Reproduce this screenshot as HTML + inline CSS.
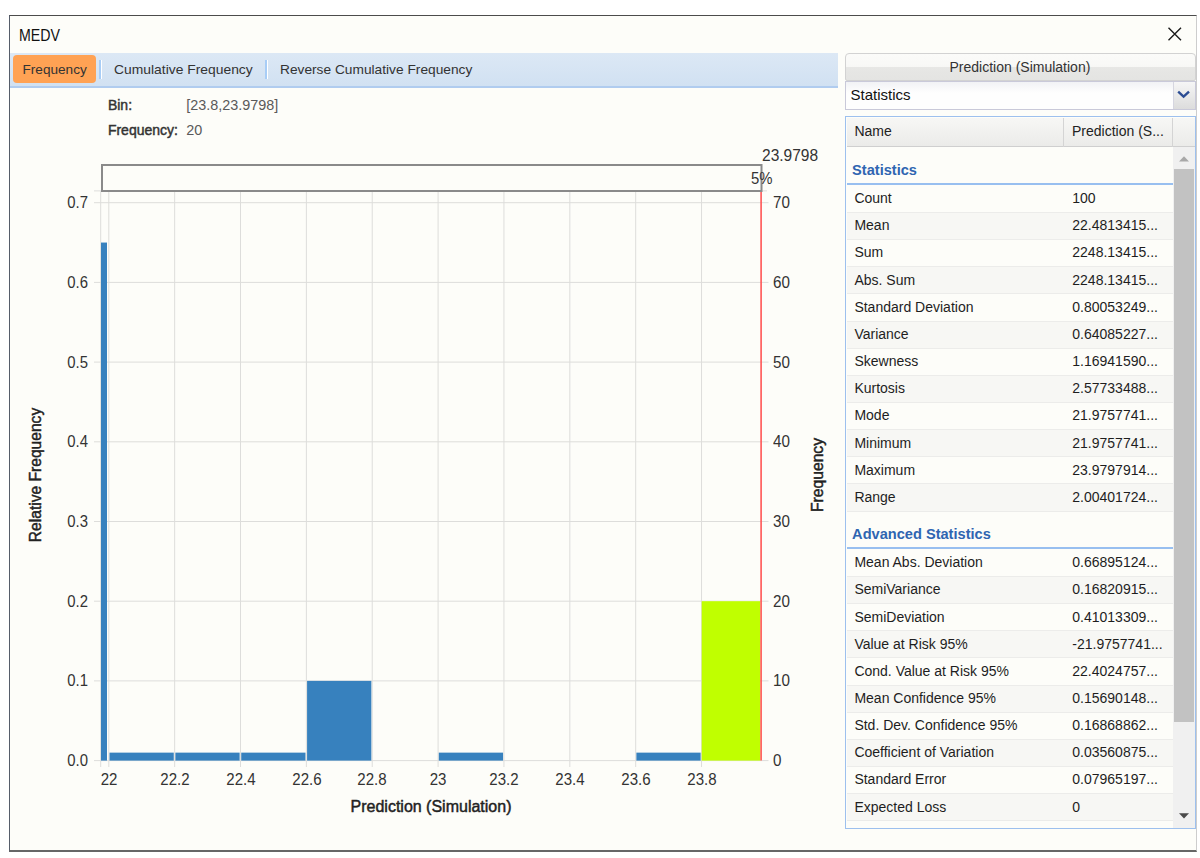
<!DOCTYPE html>
<html><head><meta charset="utf-8"><style>
html,body{margin:0;padding:0;width:1200px;height:858px;overflow:hidden;background:#ffffff;}
body{position:relative;font-family:"Liberation Sans",sans-serif;}
.t{position:absolute;white-space:nowrap;line-height:1;}
.a{position:absolute;box-sizing:border-box;}
</style></head><body>
<div class="a" style="left:9px;top:15px;width:1188px;height:837px;border-style:solid;border-width:1px 1px 2px 1px;border-color:#4c4c4c #cdcdcd #666 #565d6a;background:#fdfdf9;"></div>
<div class="t" style="left:19.20px;top:28.02px;font-size:15.6px;color:#111;transform:scaleX(0.91);transform-origin:0 0;">MEDV</div>
<svg class="a" style="left:1166px;top:25px" width="18" height="18"><path d="M2.5 2.8 L15 15.2 M15 2.8 L2.5 15.2" stroke="#1a1a1a" stroke-width="1.4" fill="none"/></svg>
<div class="a" style="left:10px;top:52.5px;width:828px;height:35.5px;background:linear-gradient(#dce8f5,#d1e1f2);border-bottom:2px solid #b0ccef;"></div>
<div class="a" style="left:13px;top:55.3px;width:82.5px;height:28px;background:#ffa254;border-radius:4px;"></div>
<div class="a" style="left:99px;top:60px;width:2px;height:18.5px;background:#a8cdf6;border-right:1px solid #fff;box-sizing:content-box"></div>
<div class="a" style="left:264.5px;top:60px;width:2px;height:18.5px;background:#a8cdf6;border-right:1px solid #fff;box-sizing:content-box"></div>
<div class="t" style="left:22.50px;top:62.82px;font-size:13.6px;color:#333;">Frequency</div>
<div class="t" style="left:113.80px;top:62.82px;font-size:13.6px;color:#333;transform:scaleX(1.02);transform-origin:0 0;">Cumulative Frequency</div>
<div class="t" style="left:279.50px;top:62.82px;font-size:13.6px;color:#333;transform:scaleX(1.01);transform-origin:0 0;">Reverse Cumulative Frequency</div>
<div class="t" style="left:107.90px;top:98.18px;font-size:14px;color:#333;-webkit-text-stroke:0.45px #333;">Bin:</div>
<div class="t" style="left:186.30px;top:98.34px;font-size:14.4px;color:#5a5a5a;">[23.8,23.9798]</div>
<div class="t" style="left:107.90px;top:122.58px;font-size:14px;color:#333;-webkit-text-stroke:0.45px #333;">Frequency:</div>
<div class="t" style="left:186.30px;top:122.74px;font-size:14.4px;color:#5a5a5a;">20</div>
<svg class="a" style="left:0;top:0" width="840" height="858"><line x1="100.7" y1="191" x2="100.7" y2="767" stroke="#dddddb" stroke-width="1"/><line x1="108.8" y1="191" x2="108.8" y2="767" stroke="#dddddb" stroke-width="1"/><line x1="174.66" y1="191" x2="174.66" y2="767" stroke="#dddddb" stroke-width="1"/><line x1="240.52" y1="191" x2="240.52" y2="767" stroke="#dddddb" stroke-width="1"/><line x1="306.38" y1="191" x2="306.38" y2="767" stroke="#dddddb" stroke-width="1"/><line x1="372.24" y1="191" x2="372.24" y2="767" stroke="#dddddb" stroke-width="1"/><line x1="438.1" y1="191" x2="438.1" y2="767" stroke="#dddddb" stroke-width="1"/><line x1="503.96" y1="191" x2="503.96" y2="767" stroke="#dddddb" stroke-width="1"/><line x1="569.82" y1="191" x2="569.82" y2="767" stroke="#dddddb" stroke-width="1"/><line x1="635.68" y1="191" x2="635.68" y2="767" stroke="#dddddb" stroke-width="1"/><line x1="701.54" y1="191" x2="701.54" y2="767" stroke="#dddddb" stroke-width="1"/><line x1="94" y1="190.9" x2="767" y2="190.9" stroke="#dddddb" stroke-width="1"/><line x1="94" y1="760.6" x2="768.5" y2="760.6" stroke="#dddddb" stroke-width="1"/><line x1="94" y1="680.9" x2="768.5" y2="680.9" stroke="#dddddb" stroke-width="1"/><line x1="94" y1="601.2" x2="768.5" y2="601.2" stroke="#dddddb" stroke-width="1"/><line x1="94" y1="521.5" x2="768.5" y2="521.5" stroke="#dddddb" stroke-width="1"/><line x1="94" y1="441.8" x2="768.5" y2="441.8" stroke="#dddddb" stroke-width="1"/><line x1="94" y1="362.1" x2="768.5" y2="362.1" stroke="#dddddb" stroke-width="1"/><line x1="94" y1="282.4" x2="768.5" y2="282.4" stroke="#dddddb" stroke-width="1"/><line x1="94" y1="202.7" x2="768.5" y2="202.7" stroke="#dddddb" stroke-width="1"/></svg>
<svg class="a" style="left:0;top:0" width="840" height="858"><rect x="101" y="242.55" width="6" height="518.05" fill="#3781be"/><rect x="109.50" y="752.63" width="64.26" height="7.97" fill="#3781be"/><rect x="175.36" y="752.63" width="64.26" height="7.97" fill="#3781be"/><rect x="241.22" y="752.63" width="64.26" height="7.97" fill="#3781be"/><rect x="307.08" y="680.90" width="64.26" height="79.70" fill="#3781be"/><rect x="438.80" y="752.63" width="64.26" height="7.97" fill="#3781be"/><rect x="636.38" y="752.63" width="64.26" height="7.97" fill="#3781be"/><rect x="701.7" y="601.20" width="58.6" height="159.40" fill="#c0ff00"/><line x1="761.1" y1="191" x2="761.1" y2="760.60" stroke="#ff5555" stroke-width="1.6"/><rect x="102" y="165" width="659.5" height="26" fill="none" stroke="#8a8a8a" stroke-width="2"/></svg>
<div class="t" style="left:87.50px;top:753.18px;font-size:16px;color:#333;transform:translateX(-100%) scaleX(0.93);transform-origin:100% 0;">0.0</div>
<div class="t" style="left:773.00px;top:753.18px;font-size:16px;color:#333;transform:scaleX(0.95);transform-origin:0 0;">0</div>
<div class="t" style="left:87.50px;top:673.48px;font-size:16px;color:#333;transform:translateX(-100%) scaleX(0.93);transform-origin:100% 0;">0.1</div>
<div class="t" style="left:773.00px;top:673.48px;font-size:16px;color:#333;transform:scaleX(0.95);transform-origin:0 0;">10</div>
<div class="t" style="left:87.50px;top:593.78px;font-size:16px;color:#333;transform:translateX(-100%) scaleX(0.93);transform-origin:100% 0;">0.2</div>
<div class="t" style="left:773.00px;top:593.78px;font-size:16px;color:#333;transform:scaleX(0.95);transform-origin:0 0;">20</div>
<div class="t" style="left:87.50px;top:514.08px;font-size:16px;color:#333;transform:translateX(-100%) scaleX(0.93);transform-origin:100% 0;">0.3</div>
<div class="t" style="left:773.00px;top:514.08px;font-size:16px;color:#333;transform:scaleX(0.95);transform-origin:0 0;">30</div>
<div class="t" style="left:87.50px;top:434.38px;font-size:16px;color:#333;transform:translateX(-100%) scaleX(0.93);transform-origin:100% 0;">0.4</div>
<div class="t" style="left:773.00px;top:434.38px;font-size:16px;color:#333;transform:scaleX(0.95);transform-origin:0 0;">40</div>
<div class="t" style="left:87.50px;top:354.68px;font-size:16px;color:#333;transform:translateX(-100%) scaleX(0.93);transform-origin:100% 0;">0.5</div>
<div class="t" style="left:773.00px;top:354.68px;font-size:16px;color:#333;transform:scaleX(0.95);transform-origin:0 0;">50</div>
<div class="t" style="left:87.50px;top:274.98px;font-size:16px;color:#333;transform:translateX(-100%) scaleX(0.93);transform-origin:100% 0;">0.6</div>
<div class="t" style="left:773.00px;top:274.98px;font-size:16px;color:#333;transform:scaleX(0.95);transform-origin:0 0;">60</div>
<div class="t" style="left:87.50px;top:195.28px;font-size:16px;color:#333;transform:translateX(-100%) scaleX(0.93);transform-origin:100% 0;">0.7</div>
<div class="t" style="left:773.00px;top:195.28px;font-size:16px;color:#333;transform:scaleX(0.95);transform-origin:0 0;">70</div>
<div class="t" style="left:109.00px;top:772.08px;font-size:16px;color:#333;transform:translateX(-50%) scaleX(0.94);transform-origin:50% 0;">22</div>
<div class="t" style="left:174.86px;top:772.08px;font-size:16px;color:#333;transform:translateX(-50%) scaleX(0.94);transform-origin:50% 0;">22.2</div>
<div class="t" style="left:240.72px;top:772.08px;font-size:16px;color:#333;transform:translateX(-50%) scaleX(0.94);transform-origin:50% 0;">22.4</div>
<div class="t" style="left:306.58px;top:772.08px;font-size:16px;color:#333;transform:translateX(-50%) scaleX(0.94);transform-origin:50% 0;">22.6</div>
<div class="t" style="left:372.44px;top:772.08px;font-size:16px;color:#333;transform:translateX(-50%) scaleX(0.94);transform-origin:50% 0;">22.8</div>
<div class="t" style="left:438.30px;top:772.08px;font-size:16px;color:#333;transform:translateX(-50%) scaleX(0.94);transform-origin:50% 0;">23</div>
<div class="t" style="left:504.16px;top:772.08px;font-size:16px;color:#333;transform:translateX(-50%) scaleX(0.94);transform-origin:50% 0;">23.2</div>
<div class="t" style="left:570.02px;top:772.08px;font-size:16px;color:#333;transform:translateX(-50%) scaleX(0.94);transform-origin:50% 0;">23.4</div>
<div class="t" style="left:635.88px;top:772.08px;font-size:16px;color:#333;transform:translateX(-50%) scaleX(0.94);transform-origin:50% 0;">23.6</div>
<div class="t" style="left:701.74px;top:772.08px;font-size:16px;color:#333;transform:translateX(-50%) scaleX(0.94);transform-origin:50% 0;">23.8</div>
<div class="t" style="left:761.50px;top:148.48px;font-size:16px;color:#333;transform:scaleX(0.97);transform-origin:0 0;">23.9798</div>
<div class="t" style="left:750.50px;top:170.58px;font-size:16px;color:#333;transform:scaleX(0.93);transform-origin:0 0;">5%</div>
<div class="t" style="left:431.00px;top:799.18px;font-size:16px;color:#222;transform:translateX(-50%);transform-origin:50% 0;-webkit-text-stroke:0.45px #222;">Prediction (Simulation)</div>
<div class="t" style="left:35.5px;top:475px;font-size:16px;color:#222;-webkit-text-stroke:0.45px #222;transform:translate(-50%,-50%) rotate(-90deg) scaleX(0.975);">Relative Frequency</div>
<div class="t" style="left:817.5px;top:475px;font-size:16px;color:#222;-webkit-text-stroke:0.45px #222;transform:translate(-50%,-50%) rotate(-90deg) scaleX(0.98);">Frequency</div>
<div class="a" style="left:845px;top:53px;width:351px;height:28px;border:1px solid #d2d2d2;border-radius:4px 4px 2px 2px;background:linear-gradient(#fbfbf9 0,#f8f8f6 48%,#e7e7e5 50%,#e4e4e2 100%);"></div>
<div class="t" style="left:949.50px;top:59.58px;font-size:14px;color:#333;">Prediction (Simulation)</div>
<div class="a" style="left:845px;top:81px;width:351px;height:29px;border:1px solid #c9c9d9;background:linear-gradient(#f1f2f5,#fefefe 40%);"></div>
<div class="a" style="left:1173px;top:82px;width:22px;height:27px;background:linear-gradient(#f6f6f6,#dcdcdc);border-left:1px solid #d6d6e0;"></div>
<svg class="a" style="left:1176px;top:88px" width="16" height="12"><path d="M2.2 3.6 L7.6 8.6 L13 3.6" stroke="#2b4c93" stroke-width="2.4" fill="none"/></svg>
<div class="t" style="left:850.50px;top:87.38px;font-size:15px;color:#111;">Statistics</div>
<div class="a" style="left:845px;top:116px;width:351px;height:713px;border:1.5px solid #9dc0ee;background:#fdfdf9;"></div>
<div class="a" style="left:846.5px;top:117.5px;width:348px;height:29.5px;background:linear-gradient(#f7f7f5,#ebebe9);border-bottom:1px solid #cfcfcf;"></div>
<div class="a" style="left:1063px;top:117.5px;width:1px;height:29px;background:#d4d4d4;"></div>
<div class="a" style="left:1172px;top:117.5px;width:1px;height:29px;background:#d4d4d4;"></div>
<div class="t" style="left:854.40px;top:123.58px;font-size:14px;color:#222;">Name</div>
<div class="t" style="left:1072.00px;top:123.58px;font-size:14px;color:#222;">Prediction (S...</div>
<div class="a" style="left:1173px;top:147px;width:21.5px;height:680.5px;background:#f0f0f0;"></div>
<div class="a" style="left:1174px;top:169px;width:19.5px;height:553px;background:#c2c2c2;"></div>
<svg class="a" style="left:1173px;top:150px" width="22" height="16"><path d="M6 11.5 L11 6.2 L16 11.5 Z" fill="#a8a8a8"/></svg>
<svg class="a" style="left:1173px;top:806px" width="22" height="16"><path d="M6 7.2 L11 12.6 L16 7.2 Z" fill="#4a4a4a"/></svg>
<div class="a" style="left:846.5px;top:183.30px;width:326.5px;height:2px;background:#98bff0;"></div>
<div class="t" style="left:852.10px;top:162.62px;font-size:14.6px;font-weight:700;color:#2f65b1;transform:scaleX(1.0);transform-origin:0 0;">Statistics</div>
<div class="a" style="left:846.5px;top:185.80px;width:326.5px;height:27.15px;background:#fdfdf9;border-bottom:1px solid #ececea;"></div>
<div class="t" style="left:854.40px;top:191.15px;font-size:14px;color:#1e1e1e;">Count</div>
<div class="t" style="left:1072.30px;top:191.15px;font-size:14px;color:#1e1e1e;">100</div>
<div class="a" style="left:846.5px;top:212.95px;width:326.5px;height:27.15px;background:#f7f7f4;border-bottom:1px solid #ececea;"></div>
<div class="t" style="left:854.40px;top:218.30px;font-size:14px;color:#1e1e1e;">Mean</div>
<div class="t" style="left:1072.30px;top:218.30px;font-size:14px;color:#1e1e1e;">22.4813415...</div>
<div class="a" style="left:846.5px;top:240.10px;width:326.5px;height:27.15px;background:#fdfdf9;border-bottom:1px solid #ececea;"></div>
<div class="t" style="left:854.40px;top:245.45px;font-size:14px;color:#1e1e1e;">Sum</div>
<div class="t" style="left:1072.30px;top:245.45px;font-size:14px;color:#1e1e1e;">2248.13415...</div>
<div class="a" style="left:846.5px;top:267.25px;width:326.5px;height:27.15px;background:#f7f7f4;border-bottom:1px solid #ececea;"></div>
<div class="t" style="left:854.40px;top:272.60px;font-size:14px;color:#1e1e1e;">Abs. Sum</div>
<div class="t" style="left:1072.30px;top:272.60px;font-size:14px;color:#1e1e1e;">2248.13415...</div>
<div class="a" style="left:846.5px;top:294.40px;width:326.5px;height:27.15px;background:#fdfdf9;border-bottom:1px solid #ececea;"></div>
<div class="t" style="left:854.40px;top:299.75px;font-size:14px;color:#1e1e1e;">Standard Deviation</div>
<div class="t" style="left:1072.30px;top:299.75px;font-size:14px;color:#1e1e1e;">0.80053249...</div>
<div class="a" style="left:846.5px;top:321.55px;width:326.5px;height:27.15px;background:#f7f7f4;border-bottom:1px solid #ececea;"></div>
<div class="t" style="left:854.40px;top:326.90px;font-size:14px;color:#1e1e1e;">Variance</div>
<div class="t" style="left:1072.30px;top:326.90px;font-size:14px;color:#1e1e1e;">0.64085227...</div>
<div class="a" style="left:846.5px;top:348.70px;width:326.5px;height:27.15px;background:#fdfdf9;border-bottom:1px solid #ececea;"></div>
<div class="t" style="left:854.40px;top:354.05px;font-size:14px;color:#1e1e1e;">Skewness</div>
<div class="t" style="left:1072.30px;top:354.05px;font-size:14px;color:#1e1e1e;">1.16941590...</div>
<div class="a" style="left:846.5px;top:375.85px;width:326.5px;height:27.15px;background:#f7f7f4;border-bottom:1px solid #ececea;"></div>
<div class="t" style="left:854.40px;top:381.20px;font-size:14px;color:#1e1e1e;">Kurtosis</div>
<div class="t" style="left:1072.30px;top:381.20px;font-size:14px;color:#1e1e1e;">2.57733488...</div>
<div class="a" style="left:846.5px;top:403.00px;width:326.5px;height:27.15px;background:#fdfdf9;border-bottom:1px solid #ececea;"></div>
<div class="t" style="left:854.40px;top:408.35px;font-size:14px;color:#1e1e1e;">Mode</div>
<div class="t" style="left:1072.30px;top:408.35px;font-size:14px;color:#1e1e1e;">21.9757741...</div>
<div class="a" style="left:846.5px;top:430.15px;width:326.5px;height:27.15px;background:#f7f7f4;border-bottom:1px solid #ececea;"></div>
<div class="t" style="left:854.40px;top:435.50px;font-size:14px;color:#1e1e1e;">Minimum</div>
<div class="t" style="left:1072.30px;top:435.50px;font-size:14px;color:#1e1e1e;">21.9757741...</div>
<div class="a" style="left:846.5px;top:457.30px;width:326.5px;height:27.15px;background:#fdfdf9;border-bottom:1px solid #ececea;"></div>
<div class="t" style="left:854.40px;top:462.65px;font-size:14px;color:#1e1e1e;">Maximum</div>
<div class="t" style="left:1072.30px;top:462.65px;font-size:14px;color:#1e1e1e;">23.9797914...</div>
<div class="a" style="left:846.5px;top:484.45px;width:326.5px;height:27.15px;background:#f7f7f4;border-bottom:1px solid #ececea;"></div>
<div class="t" style="left:854.40px;top:489.80px;font-size:14px;color:#1e1e1e;">Range</div>
<div class="t" style="left:1072.30px;top:489.80px;font-size:14px;color:#1e1e1e;">2.00401724...</div>
<div class="a" style="left:846.5px;top:547.20px;width:326.5px;height:2px;background:#98bff0;"></div>
<div class="t" style="left:852.10px;top:526.52px;font-size:14.6px;font-weight:700;color:#2f65b1;transform:scaleX(1.0);transform-origin:0 0;">Advanced Statistics</div>
<div class="a" style="left:846.5px;top:549.90px;width:326.5px;height:27.15px;background:#fdfdf9;border-bottom:1px solid #ececea;"></div>
<div class="t" style="left:854.40px;top:555.25px;font-size:14px;color:#1e1e1e;">Mean Abs. Deviation</div>
<div class="t" style="left:1072.30px;top:555.25px;font-size:14px;color:#1e1e1e;">0.66895124...</div>
<div class="a" style="left:846.5px;top:577.05px;width:326.5px;height:27.15px;background:#f7f7f4;border-bottom:1px solid #ececea;"></div>
<div class="t" style="left:854.40px;top:582.40px;font-size:14px;color:#1e1e1e;">SemiVariance</div>
<div class="t" style="left:1072.30px;top:582.40px;font-size:14px;color:#1e1e1e;">0.16820915...</div>
<div class="a" style="left:846.5px;top:604.20px;width:326.5px;height:27.15px;background:#fdfdf9;border-bottom:1px solid #ececea;"></div>
<div class="t" style="left:854.40px;top:609.55px;font-size:14px;color:#1e1e1e;">SemiDeviation</div>
<div class="t" style="left:1072.30px;top:609.55px;font-size:14px;color:#1e1e1e;">0.41013309...</div>
<div class="a" style="left:846.5px;top:631.35px;width:326.5px;height:27.15px;background:#f7f7f4;border-bottom:1px solid #ececea;"></div>
<div class="t" style="left:854.40px;top:636.70px;font-size:14px;color:#1e1e1e;">Value at Risk 95%</div>
<div class="t" style="left:1072.30px;top:636.70px;font-size:14px;color:#1e1e1e;">-21.9757741...</div>
<div class="a" style="left:846.5px;top:658.50px;width:326.5px;height:27.15px;background:#fdfdf9;border-bottom:1px solid #ececea;"></div>
<div class="t" style="left:854.40px;top:663.85px;font-size:14px;color:#1e1e1e;">Cond. Value at Risk 95%</div>
<div class="t" style="left:1072.30px;top:663.85px;font-size:14px;color:#1e1e1e;">22.4024757...</div>
<div class="a" style="left:846.5px;top:685.65px;width:326.5px;height:27.15px;background:#f7f7f4;border-bottom:1px solid #ececea;"></div>
<div class="t" style="left:854.40px;top:691.00px;font-size:14px;color:#1e1e1e;">Mean Confidence 95%</div>
<div class="t" style="left:1072.30px;top:691.00px;font-size:14px;color:#1e1e1e;">0.15690148...</div>
<div class="a" style="left:846.5px;top:712.80px;width:326.5px;height:27.15px;background:#fdfdf9;border-bottom:1px solid #ececea;"></div>
<div class="t" style="left:854.40px;top:718.15px;font-size:14px;color:#1e1e1e;">Std. Dev. Confidence 95%</div>
<div class="t" style="left:1072.30px;top:718.15px;font-size:14px;color:#1e1e1e;">0.16868862...</div>
<div class="a" style="left:846.5px;top:739.95px;width:326.5px;height:27.15px;background:#f7f7f4;border-bottom:1px solid #ececea;"></div>
<div class="t" style="left:854.40px;top:745.30px;font-size:14px;color:#1e1e1e;">Coefficient of Variation</div>
<div class="t" style="left:1072.30px;top:745.30px;font-size:14px;color:#1e1e1e;">0.03560875...</div>
<div class="a" style="left:846.5px;top:767.10px;width:326.5px;height:27.15px;background:#fdfdf9;border-bottom:1px solid #ececea;"></div>
<div class="t" style="left:854.40px;top:772.45px;font-size:14px;color:#1e1e1e;">Standard Error</div>
<div class="t" style="left:1072.30px;top:772.45px;font-size:14px;color:#1e1e1e;">0.07965197...</div>
<div class="a" style="left:846.5px;top:794.25px;width:326.5px;height:27.15px;background:#f7f7f4;border-bottom:1px solid #ececea;"></div>
<div class="t" style="left:854.40px;top:799.60px;font-size:14px;color:#1e1e1e;">Expected Loss</div>
<div class="t" style="left:1072.30px;top:799.60px;font-size:14px;color:#1e1e1e;">0</div>
</body></html>
